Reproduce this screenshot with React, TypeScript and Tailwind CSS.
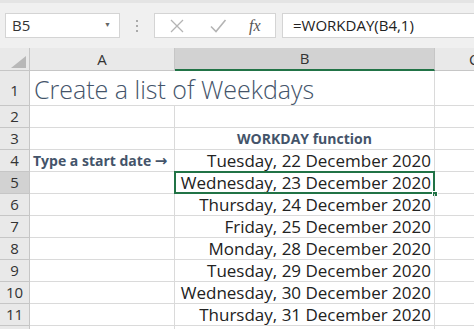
import React from 'react'

const dates: Record<number, string> = {
  4: 'Tuesday, 22 December 2020',
  5: 'Wednesday, 23 December 2020',
  6: 'Thursday, 24 December 2020',
  7: 'Friday, 25 December 2020',
  8: 'Monday, 28 December 2020',
  9: 'Tuesday, 29 December 2020',
  10: 'Wednesday, 30 December 2020',
  11: 'Thursday, 31 December 2020',
}

const rows = [2, 3, 4, 5, 6, 7, 8, 9, 10, 11, 12]

function CloseIcon() {
  return (
    <svg width="16" height="16" viewBox="0 0 16 16" fill="none" stroke="#b4b4b4" strokeWidth={1.3}>
      <path d="M2 2l12 12M14 2L2 14" />
    </svg>
  )
}

function CheckIcon() {
  return (
    <svg width="18" height="16" viewBox="0 0 18 16" fill="none" stroke="#b4b4b4" strokeWidth={1.6}>
      <path d="M2 8.5l5 5L16.5 2" />
    </svg>
  )
}

export default function App() {
  return (
    <div className="w-[474px] h-[329px] overflow-hidden bg-white font-['Open_Sans',sans-serif] text-[#222]">
      {/* Formula bar */}
      <div className="h-[48px] bg-[#f0f0f0] border-t-[3px] border-[#e4e4e4] flex items-center pl-[5px] gap-[6px]">
        <div className="w-[115px] h-[25px] bg-white border border-[#d4d4d4] flex items-center justify-between pl-[6px] pr-[8px]">
          <span className="text-[15px] text-[#333]">B5</span>
          <span className="text-[7px] text-[#666]">▼</span>
        </div>
        <div className="w-[22px] flex flex-col items-center gap-[3px]">
          <span className="w-[2px] h-[2px] bg-[#aaa]" />
          <span className="w-[2px] h-[2px] bg-[#aaa]" />
          <span className="w-[2px] h-[2px] bg-[#aaa]" />
        </div>
        <div className="w-[122px] h-[25px] bg-white border border-[#d4d4d4] flex items-center pl-[14px] gap-[24px]">
          <CloseIcon />
          <CheckIcon />
          <span className="font-['Liberation_Serif',serif] italic text-[16px] text-[#555] -ml-[2px]">fx</span>
        </div>
        <div className="flex-1 h-[25px] bg-white border border-r-0 border-[#d4d4d4] flex items-center pl-[10px]">
          <span className="text-[15px] text-[#222]">=WORKDAY(B4,1)</span>
        </div>
      </div>

      {/* Sheet */}
      <div className="grid grid-cols-[30px_145px_260px_1fr]">
        {/* Column headers */}
        <div className="h-[23px] bg-[#e9e9e9] border-r border-b border-[#c6c6c6] flex items-end justify-end pr-[3px] pb-[2px]">
          <div className="w-0 h-0 border-l-[15px] border-l-transparent border-b-[12px] border-b-[#b8b8b8]" />
        </div>
        <div className="h-[23px] bg-[#e9e9e9] border-r border-b border-[#c6c6c6] flex items-center justify-center text-[15px] text-[#333]">A</div>
        <div className="h-[23px] bg-[#d2d2d2] border-r border-b-2 border-r-[#c6c6c6] border-b-[#217346] flex items-center justify-center text-[15px] text-[#333]">B</div>
        <div className="h-[23px] bg-[#e9e9e9] border-b border-[#c6c6c6] flex items-center pl-[34px] text-[15px] text-[#333]">C</div>

        {/* Row 1 */}
        <div className="h-[35px] bg-[#e9e9e9] border-r border-b border-[#c6c6c6] flex items-end justify-center pb-[4px] text-[15px] text-[#333]">1</div>
        <div className="col-span-2 h-[35px] border-r border-b border-[#dadada] flex items-end pl-[4px] pb-[1px] whitespace-nowrap font-light text-[25px] leading-[30px] text-[#44546a]">
          Create a list of Weekdays
        </div>
        <div className="h-[35px] border-b border-[#dadada]" />

        {rows.map((row) => {
          const selected = row === 5
          const d = dates[row]
          return (
            <React.Fragment key={row}>
              <div
                className={`h-[22px] border-r border-b border-[#c6c6c6] flex items-center justify-center text-[15px] text-[#333] ${
                  selected ? 'bg-[#d2d2d2]' : 'bg-[#e9e9e9]'
                }`}
              >
                {row < 12 ? row : ''}
              </div>
              <div className="h-[22px] border-r border-b border-[#dadada] flex items-center pl-[3px] whitespace-nowrap">
                {row === 4 && (
                  <span className="font-bold text-[14px] text-[#44546a]">
                    Type a start date{' '}
                    <span className="font-['DejaVu_Sans',sans-serif] text-[15px] leading-none">→</span>
                  </span>
                )}
              </div>
              <div
                className={`relative h-[22px] border-r border-b border-[#dadada] flex items-center whitespace-nowrap ${
                  row === 3 ? 'justify-center' : 'justify-end pr-[3px]'
                }`}
              >
                {row === 3 && <span className="font-bold text-[14px] text-[#44546a]">WORKDAY function</span>}
                {d && <span className="text-[17px] leading-[22px]">{d}</span>}
                {selected && (
                  <>
                    <div className="absolute -left-px -top-px -right-px -bottom-px border-2 border-[#217346]" />
                    <div className="absolute -right-[4px] -bottom-[4px] w-[6px] h-[6px] bg-[#217346] border border-white" />
                  </>
                )}
              </div>
              <div className="h-[22px] border-b border-[#dadada]" />
            </React.Fragment>
          )
        })}
      </div>
    </div>
  )
}
